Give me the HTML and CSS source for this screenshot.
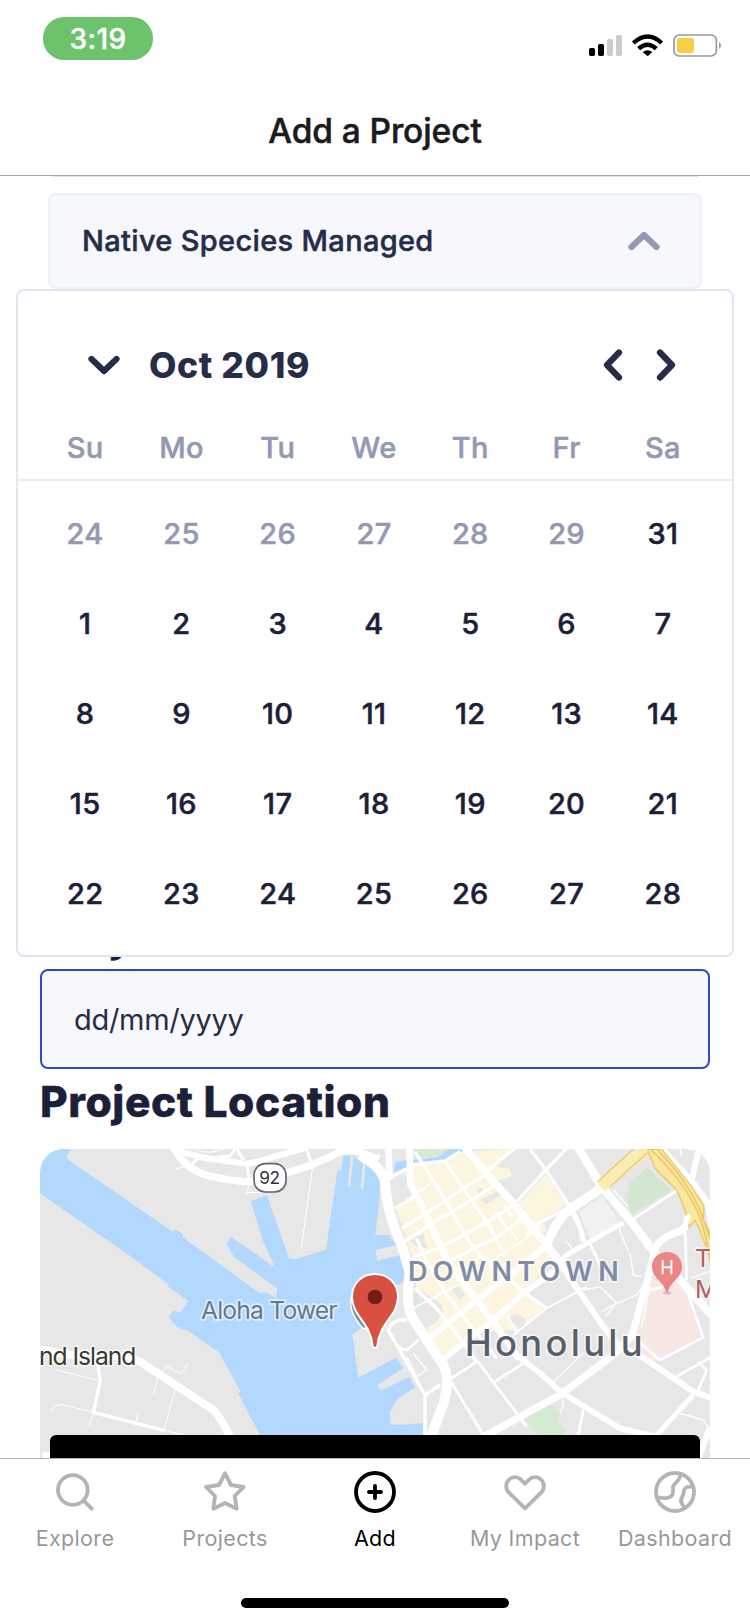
FILE: index.html
```html
<!DOCTYPE html>
<html lang="en">
<head>
<meta charset="utf-8">
<title>Add a Project</title>
<link rel="stylesheet" href="styles.css">
</head>
<body>
<div class="app">
  <header class="header">
    <div class="status">
      <span class="clock">3:19</span>
      <svg class="status-icons" viewBox="642 99 402 75">
        <rect x="642" y="144" width="18" height="24" rx="5"/>
        <rect x="669" y="132" width="18" height="36" rx="5"/>
        <g fill="#ccc"><rect x="696" y="117" width="18" height="51" rx="5"/><rect x="723" y="105" width="18" height="63" rx="5"/></g>
        <g fill="none" stroke="#000" stroke-width="13"><path d="M775 129Q818 90 860 129"/><path d="M791 146Q818 122 844 146"/></g>
        <path d="M803 156Q818 145 832 156L818 169Z"/>
        <rect x="897" y="105" width="127" height="63" rx="16" fill="none" stroke="#999" stroke-width="5"/>
        <rect x="906" y="114" width="51" height="45" rx="8" fill="#f7ce46"/>
        <path d="M1032 125Q1044 137 1032 148Z" fill="#999"/>
      </svg>
    </div>
    <h1 class="title"><span>Add a Project</span></h1>
  </header>

  <main class="content">
    <div class="previous-field"></div>
    <div class="select">
      <span class="select-label">Native Species Managed</span>
      <svg class="select-icon" viewBox="0 0 34 22"><path d="M4.500 17L17 5L29.500 17"/></svg>
    </div>
    <h2 class="heading heading-date">Project Date</h2>
    <div class="date-input"><span>dd/mm/yyyy</span></div>
    <h2 class="heading">Project Location</h2>
    <div class="map-wrap">
      <svg class="map" viewBox="30 27 2010 930">
        <rect x="30" y="27" width="2010" height="930" fill="#e7e7e7"/>
        <path fill="#b3d8fd" d="M30 27H123L108 55L428 275L436 268L460 283L458 292L690 460L708 456L738 475L742 445L612 352L590 312L603 290L735 383L700 305L662 183L711 166L777 355L798 357L888 329L922 92L934 90L940 47L990 47L1030 75L1050 120L1048 190L1036 285L1075 285L1100 315L1037 330L1042 362L1110 345L1125 370L1120 425L1090 440L1010 548L968 585L985 713L1100 652L1120 685L1042 735L1052 752L1138 710L1155 742L1105 775L1080 815L1080 850L1095 855L1178 850L1182 957H720L690 885L625 762L632 755L568 638L475 572L440 560L416 530L432 510L450 518L475 482L415 440L412 430L310 355L30 160Z"/>
        <path fill="none" stroke="#e7e7e7" stroke-width="8" d="M966 47L957 140M975 47L1003 68L996 146"/>
        <g fill="none" stroke="#fff" stroke-linejoin="round">
          <path stroke-width="22" d="M430 20Q470 100 560 112Q610 125 665 124Q740 110 845 75L930 36Q990 20 1040 65"/>
          <path stroke-width="18" d="M440 32L530 55L650 72L700 60L830 22"/>
          <path stroke-width="9" d="M650 70L659 130M620 27L640 60M830 27L845 75M615 27L600 48L500 58L480 78M1000 38L1050 50"/>
          <path stroke-width="3" d="M659 130L649 158H700M848 80L814 326M435 86L480 78M500 30Q540 45 580 27"/>
          <path stroke-width="24" d="M30 628L120 645Q270 640 330 665L550 810Q575 835 605 900"/>
          <path stroke-width="10" d="M203 670L211 722L190 817L404 872"/>
          <path stroke-width="18" stroke-linecap="round" d="M44 945H70"/>
          <path stroke-width="3" d="M78 690L210 722M65 810Q80 790 100 794L190 817L178 857M372 762L385 705L412 680L453 702L474 670M437 747L427 777L403 870L460 885M323 822L318 845"/>
        </g>
        <g transform="translate(1020 0)">
          <path fill="#d4ead2" d="M130 27H250L190 50H135Z"/>
          <path fill="#b3d8fd" d="M70 97L76 65L200 52L240 27H300L240 62L130 80Z"/>
          <path fill="#d3e6cf" d="M832 80L905 150L785 223L768 175L780 130Z"/>
          <path fill="#d4ead2" d="M465 832L545 793L572 820L560 840L588 865L580 900H515ZM132 460L155 490L132 508Z"/>
          <path fill="#eff1f3" stroke="#dfe1e4" stroke-width="2" d="M625 215L697 165L750 248L660 300Z"/>
          <path fill="#f7e8e6" d="M855 395L925 430L962 490L1000 590L845 665L790 620L830 470Z"/>
          <g transform="translate(30 15)">
            <path fill="#fcf6e0" d="M58 98L78 88L95 150L48 188L80 285L95 335L110 430L165 480L190 500L170 530L140 550L160 595L190 630L240 610L300 560L390 555L405 560L490 500L485 480L430 440L525 340L510 290L480 275L460 235L415 175L385 150L345 110L395 95L390 70L350 65L395 12L240 20L190 50L100 62Z"/>
            <path fill="#fcf6e0" d="M412 178L498 88L560 180L465 235ZM470 245L490 235L500 255L490 265Z"/>
            <path fill="#e7e7e7" d="M85 285L130 265L142 310L110 305ZM125 435L185 480L190 515L165 505ZM385 520L405 505L440 522L425 558ZM300 165L355 137L362 150L320 178ZM292 132L308 128L308 142L295 145ZM215 435L235 420L255 450L240 465Z"/>
          </g>
          <g fill="none" stroke="#fff" stroke-linejoin="round">
            <path stroke-width="30" d="M-30 45Q35 80 45 125Q50 220 95 315L120 400Q105 480 125 530L220 675Q240 720 222 785L180 900"/>
            <path stroke-width="19" d="M55 27L60 120"/>
            <g transform="translate(30 15)">
              <path stroke-width="20" d="M88 5L92 120L130 190L165 270L205 350L240 400L290 465L340 530L415 640"/>
              <path stroke-width="23" d="M252 5L310 75L400 175L500 300L540 350"/>
              <path stroke-width="18" d="M130 595L290 465L380 400L500 300M180 650L340 525L430 445L540 365"/>
              <path stroke-width="10" d="M105 20L190 155L235 235L275 300L330 360L370 385L430 440L500 490M195 50L250 130L320 230L350 285M345 200L385 255M375 180L395 215M35 95L105 58L195 48L240 20M45 190L110 152M65 250L140 205L200 165L250 130L315 92M75 290L165 230L225 195L290 155L345 122M195 300L270 260L330 225L410 175M100 335L190 305M215 345L290 305L345 280L390 250L440 205M110 280L140 350L200 450L270 540L350 640M105 430L170 490L240 580L290 650M320 78L405 10M450 12L498 75L570 185L465 240M410 170L495 78L570 0M440 270L480 235"/>
              <path stroke-width="5" d="M110 145L152 115M325 355L482 250M100 490L235 420M345 275L365 315M385 245L412 285M400 570L500 490L620 425M380 510L410 560"/>
            </g>
            <path stroke-width="17" d="M440 645L510 700L575 758L750 865L860 890"/>
            <path stroke-width="18" d="M525 315L570 370L700 560L740 610L830 660L970 755L1030 775"/>
            <path stroke-width="25" d="M620 15L695 140L780 240L855 340L930 420L1030 530"/>
            <path stroke-width="22" d="M955 228Q950 270 925 275Q850 300 850 350L830 430L785 590L730 645L570 765L340 890"/>
            <path stroke-width="28" d="M700 140L600 208Q560 235 525 325"/>
            <path stroke-width="15" d="M560 378L590 345L660 305L760 248M610 220Q635 265 640 305M970 765L860 885"/>
            <path stroke-width="10" d="M110 540Q70 535 55 570L165 765L210 735M165 765V890"/>
            <path stroke-width="8" d="M375 725L460 670M785 240L920 152M240 720L340 885M245 715L320 665M320 660L470 860M660 310L690 375M640 810L625 885M55 570Q80 630 110 630L145 600M910 715L1000 665L1025 650M985 665L1010 690L985 750M800 600L870 660L1000 592L950 450M945 250L950 420M820 455L900 435"/>
            <path stroke-width="4" d="M690 440L740 490L800 465L830 420M640 450L690 440M740 490L695 515M735 495L705 530M545 730L640 640M590 305L610 330M730 150L775 200M745 260L775 335M780 340L790 405L815 410M575 760L580 795L570 820M930 820L1000 840L1020 870M960 415L1020 395M840 440L815 560M130 640L170 690L140 710L110 650M930 27L935 50"/>
            <path stroke-width="18" d="M870 20L970 130L1030 210M985 35L965 120M1010 180L1025 260M1020 860L985 957"/>
          </g>
          <path stroke="#fbecb2" stroke-width="38" d="M692 140L830 27"/>
          <path stroke="#ecca68" stroke-width="4" fill="none" d="M683 125L790 27M720 140L832 38"/>
          <path fill="#fae7a0" stroke="#ecc765" stroke-width="4" d="M832 27H875L965 140L1002 200L1000 240L1040 320V430Q1010 310 975 240L958 262L945 210L920 150L855 85Z"/>
          <path fill="none" stroke="#ecc765" stroke-width="5" d="M840 27Q940 120 985 220Q1015 300 1025 390M860 27Q950 120 990 210L1025 310"/>
          <path stroke="#fff" stroke-width="16" stroke-linecap="round" d="M955 230L945 258"/>
        </g>
        <rect x="672" y="71" width="96" height="85" rx="34" fill="#fff" stroke="#666" stroke-width="5"/>
        <text class="map-shield" x="719" y="132" textLength="62">92</text>
        <path fill="#6f98b5" stroke="#fff" stroke-width="5" d="M966 470Q950 510 998 565L1020 565Z"/>
        <g class="map-text">
          <text class="poi" x="513" y="537" textLength="410">Aloha Tower</text>
          <text class="island" x="27" y="675" textLength="292">nd Island</text>
          <text class="district" x="1134" y="422" textLength="632">DOWNTOWN</text>
          <text class="city" x="1304" y="648" textLength="534">Honolulu</text>
          <text class="hospital" x="1995" y="382">T</text>
          <text class="hospital" x="1995" y="475">M</text>
        </g>
        <path fill="#d85040" stroke="#fff" stroke-width="6" d="M1035 402C995 402 966 432 966 470C966 530 1022 545 1028 618Q1035 630 1042 618C1048 545 1104 530 1104 470C1104 432 1075 402 1035 402Z"/>
        <circle cx="1035" cy="471" r="22" fill="#741b14"/>
        <ellipse cx="1911" cy="459" rx="13" ry="5" fill="#e2bfbe"/>
        <path fill="#ea8683" d="M1911 336C1884 336 1866 356 1866 380C1866 415 1903 425 1908 457H1914C1919 425 1956 415 1956 380C1956 356 1938 336 1911 336Z"/>
        <path fill="none" stroke="#fff" stroke-width="6" d="M1898 360V403M1924 360V403M1898 382H1924"/>
      </svg>
      <div class="action"></div>
    </div>

    <section class="calendar">
      <div class="calendar-head">
        <svg class="chevron-down" viewBox="0 0 34 22"><path d="M4.500 5L17 17L29.500 5"/></svg>
        <span class="month">Oct 2019</span>
        <svg class="chevron-side" viewBox="0 0 22 34"><path d="M17 4.500L5 17L17 29.500"/></svg>
        <svg class="chevron-side" viewBox="0 0 22 34"><path d="M5 4.500L17 17L5 29.500"/></svg>
      </div>
      <div class="week names"><span>Su</span><span>Mo</span><span>Tu</span><span>We</span><span>Th</span><span>Fr</span><span>Sa</span></div>
      <div class="week days">
        <span class="out">24</span><span class="out">25</span><span class="out">26</span><span class="out">27</span><span class="out">28</span><span class="out">29</span><span>31</span>
        <span>1</span><span>2</span><span>3</span><span>4</span><span>5</span><span>6</span><span>7</span>
        <span>8</span><span>9</span><span>10</span><span>11</span><span>12</span><span>13</span><span>14</span>
        <span>15</span><span>16</span><span>17</span><span>18</span><span>19</span><span>20</span><span>21</span>
        <span>22</span><span>23</span><span>24</span><span>25</span><span>26</span><span>27</span><span>28</span>
      </div>
    </section>
  </main>

  <nav class="tabs">
    <div class="tab"><svg viewBox="153 114 144 144"><circle cx="218.500" cy="180" r="44.500"/><path d="M251 212L275 236"/></svg><span>Explore</span></div>
    <div class="tab"><svg viewBox="603 114 144 144"><path d="M675 130L693 165L731 171L704 198L710 236L675 219L640 236L645 198L618 171L657 165Z"/></svg><span>Projects</span></div>
    <div class="tab active"><svg viewBox="1053 114 144 144"><circle cx="1125" cy="186" r="57"/><path d="M1107 186H1143M1125 168V204"/></svg><span>Add</span></div>
    <div class="tab"><svg viewBox="378 114 144 144"><path d="M450 235L401 187C391 177 391 160 401 150C411 139 428 139 438 149L450 161L462 149C472 139 489 139 499 150C509 160 509 177 499 187Z"/></svg><span>My Impact</span></div>
    <div class="tab"><svg viewBox="828 114 144 144"><circle cx="900" cy="186" r="57"/><path d="M846 201C866 207 894 207 894 186C894 170 892 167 903 158Q913 150 917 136M949 169C932 170 926 174 926 187C926 202 912 205 920 220L928 233"/></svg><span>Dashboard</span></div>
  </nav>
  <div class="home-indicator"></div>
</div>
</body>
</html>
```

FILE: styles.css
```css
* { box-sizing: border-box; }
body { margin: 0; background: #fff; font-family: Inter, "Liberation Sans", sans-serif; }
.app { width: 750px; height: 1624px; overflow: hidden; display: flex; flex-direction: column; }
svg { display: block; flex: none; }

.header { height: 176px; flex: none; border-bottom: 1px solid #a7a7aa; }
.status { display: flex; justify-content: space-between; padding: 17px 27px 0 43px; height: 87px; }
.clock { width: 110px; height: 43px; border-radius: 21px; background: #6dc36c; color: #fff; font-size: 28px; font-weight: 500; line-height: 45px; text-align: center; letter-spacing: .4px; -webkit-text-stroke: .4px; }
.status-icons { width: 134px; height: 25px; margin-top: 16px; }
.title { margin: 0; height: 88px; line-height: 89px; text-align: center; font-size: 33.500px; font-weight: 500; color: #1b1b1d; letter-spacing: -.1px; -webkit-text-stroke: .5px; }

.content { position: relative; height: 1282px; flex: none; overflow: hidden; }
.previous-field { height: 1px; margin: 0 52px 16px; background: #dfe5ef; }
.select { display: flex; align-items: center; justify-content: space-between; height: 96px; margin: 0 48px; padding: 0 39px 2px 32px; background: #f7f8fc; border: 2px solid #edf0f6; border-radius: 8px; }
.select-label { font-size: 29px; font-weight: 500; color: #262d47; letter-spacing: .33px; -webkit-text-stroke: .5px; }
.select-icon { width: 34px; height: 22px; margin-top: 1px; }
.select-icon path { fill: none; stroke: #9399b2; stroke-width: 6.200; stroke-linecap: round; stroke-linejoin: round; }

.heading { margin: 0 40px; height: 80px; font-size: 42.500px; font-weight: 800; line-height: 66px; color: #1b2038; letter-spacing: .55px; -webkit-text-stroke: .4px; }
.heading-date { height: 95px; margin-top: 585px; padding-top: 30px; line-height: 65px; }
.date-input { height: 100px; margin: 0 40px; border: 2px solid #2d4acb; border-radius: 8px; background: #f7f8fc; padding: 1px 32px 0; line-height: 96px; font-size: 29px; color: #262d47; letter-spacing: -.3px; }

.map-wrap { position: relative; margin: 0 40px; height: 309px; border-radius: 24px 24px 0 0; overflow: hidden; }
.map { width: 670px; height: 310px; }
.map-shield { font-size: 52px; fill: #333; text-anchor: middle; }
.map-text { stroke: #fff; stroke-width: 10px; stroke-opacity: .6; paint-order: stroke; stroke-linejoin: round; }
.poi { font-size: 74px; font-weight: 400; fill: #65798b; }
.island { font-size: 74px; font-weight: 400; fill: #383b2e; }
.district { font-size: 81px; font-weight: 600; fill: #808ca7; }
.city { font-size: 109px; font-weight: 500; fill: #56606b; }
.hospital { font-size: 74px; fill: #b45e5e; }
.action { position: absolute; left: 10px; right: 10px; bottom: 0; height: 23px; background: #000; border-radius: 6px 6px 0 0; }

.calendar { position: absolute; left: 16px; top: 113px; width: 718px; height: 668px; background: #fff; border: 2px solid #e2e6f1; border-radius: 8px; }
.calendar-head { display: flex; align-items: center; height: 116px; padding: 32px 55px 0 69px; }
.chevron-down { width: 34px; height: 22px; margin-right: 28px; }
.month { flex: 1; font-size: 35.500px; font-weight: 800; color: #262d47; letter-spacing: .6px; }
.chevron-side { width: 22px; height: 34px; margin-left: 31px; }
.calendar-head path { fill: none; stroke: #262d47; stroke-width: 6.200; stroke-linecap: round; stroke-linejoin: round; }
.week { display: grid; grid-template-columns: repeat(7, 1fr); padding: 0 21px 0 19px; text-align: center; font-size: 29px; font-weight: 500; letter-spacing: .3px; -webkit-text-stroke: .5px; }
.names { height: 74px; padding-top: 9px; color: #9399b2; border-bottom: 2px solid #e9edf4; }
.names span { line-height: 64px; }
.days { grid-auto-rows: 90px; line-height: 90px; padding-top: 8px; color: #1b2038; }
.days .out { color: #9399b2; }

.tabs { display: grid; grid-template-columns: repeat(5, 150px); flex: none; height: 142px; border-top: 1px solid #b2b2b2; }
.tab { display: flex; flex-direction: column; align-items: center; padding-top: 9px; color: #999; font-size: 21.500px; letter-spacing: .35px; white-space: nowrap; }
.tab svg { width: 48px; height: 48px; }
.tab path, .tab circle { fill: none; stroke: #b4b4b4; stroke-width: 11.500; stroke-linecap: round; stroke-linejoin: round; }
.tab span { line-height: 28px; margin-top: 8px; }
.tab.active { color: #000; }
.active path, .active circle { stroke: #000; }
.home-indicator { width: 268px; height: 10px; margin: -2px auto 0; border-radius: 5px; background: #000; }
```
